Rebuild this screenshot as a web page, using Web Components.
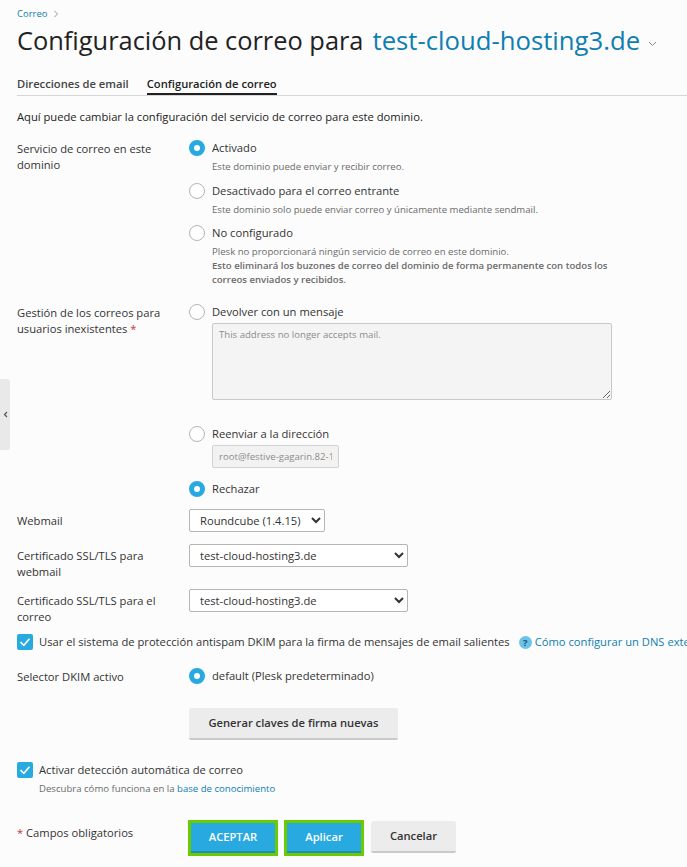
<!DOCTYPE html>
<html lang="es">
<head>
<meta charset="utf-8">
<title>Configuración de correo</title>
<style>
    html, body { margin: 0; padding: 0; height: 867px; overflow: hidden; background: #fcfcfc; }
    body { font-family: "Open Sans", sans-serif; font-size: 11.2px; line-height: 16px; color: #222; }
    a { color: #0f7eb0; text-decoration: none; }
    .req { color: #d02d4b; }
    .ln { display: block; }
    .low { display: block; padding-top: 3px; }
    b { font-weight: 600; }
</style>
</head>
<body>
<mail-page>
    <side-handle slot="handle"></side-handle>
    <page-head crumb="Correo" title-text="Configuración de correo para" domain="test-cloud-hosting3.de"></page-head>
    <tab-bar first="Direcciones de email" active="Configuración de correo"></tab-bar>
    <intro-text>Aquí puede cambiar la configuración del servicio de correo para este dominio.</intro-text>

    <form-row style="margin-top:15px">
        <span slot="label">Servicio de correo en este dominio</span>
        <radio-option checked gap="9" label="Activado">Este dominio puede enviar y recibir correo.</radio-option>
        <radio-option gap="8" label="Desactivado para el correo entrante">Este dominio solo puede enviar correo y únicamente mediante sendmail.</radio-option>
        <radio-option label="No configurado">Plesk no proporcionará ningún servicio de correo en este dominio.<br><b>Esto eliminará los buzones de correo del dominio de forma permanente con todos los correos enviados y recibidos.</b></radio-option>
    </form-row>

    <form-row style="margin-top:17px">
        <span slot="label"><span class="ln">Gestión de los correos para</span><span class="ln">usuarios inexistentes <span class="req">*</span></span></span>
        <radio-option label="Devolver con un mensaje"><message-box>This address no longer accepts mail.</message-box></radio-option>
        <radio-option style="margin-top:26px" label="Reenviar a la dirección"><address-box value="root@festive-gagarin.82-165-76-124.plesk.page"></address-box></radio-option>
        <radio-option style="margin-top:13px" checked label="Rechazar"></radio-option>
    </form-row>

    <form-row style="margin-top:8px" center>
        <span slot="label">Webmail</span>
        <select-box width="136" value="Roundcube (1.4.15)"></select-box>
    </form-row>
    <form-row style="margin-top:12px">
        <span slot="label" class="low">Certificado SSL/TLS para webmail</span>
        <select-box width="219" value="test-cloud-hosting3.de"></select-box>
    </form-row>
    <form-row style="margin-top:9px">
        <span slot="label" class="low">Certificado SSL/TLS para el correo</span>
        <select-box width="219" value="test-cloud-hosting3.de"></select-box>
    </form-row>

    <check-option style="margin-top:9px" label="Usar el sistema de protección antispam DKIM para la firma de mensajes de email salientes">
        <help-link slot="after">Cómo configurar un DNS externo</help-link>
    </check-option>

    <form-row style="margin-top:14px">
        <span slot="label">Selector DKIM activo</span>
        <radio-option checked label="default (Plesk predeterminado)"></radio-option>
    </form-row>

    <form-row style="margin-top:20px">
        <plain-button width="209" height="32">Generar claves de firma nuevas</plain-button>
    </form-row>

    <check-option style="margin-top:22px" label="Activar detección automática de correo">
        <span>Descubra cómo funciona en la <a href="#">base de conocimiento</a></span>
    </check-option>

    <form-actions style="margin-top:24px">
        <span slot="note"><span class="req">*</span> Campos obligatorios</span>
        <plain-button primary width="84" height="30" outlined>ACEPTAR</plain-button>
        <plain-button primary width="74" height="30" outlined>Aplicar</plain-button>
        <plain-button style="margin:1px 0 0 1px" width="85" height="32">Cancelar</plain-button>
    </form-actions>
</mail-page>

<script>
class MailPage extends HTMLElement {
    constructor() {
        super();
        this.attachShadow({ mode: 'open' });
        this.shadowRoot.innerHTML = `
            <style>
                :host { display: block; position: relative; height: 867px; padding: 0 0 0 17px; box-sizing: border-box; }
            </style>
            <slot name="handle"></slot>
            <slot></slot>
        `;
    }
}

class SideHandle extends HTMLElement {
    constructor() {
        super();
        this.attachShadow({ mode: 'open' });
        this.shadowRoot.innerHTML = `
            <style>
                /* sits over the page edge */
                :host {
                    position: absolute; left: 0; top: 379px; width: 10px; height: 71px;
                    background: #e9e9e9; border-radius: 0 3px 3px 0;
                    display: flex; align-items: center; justify-content: center;
                }
                svg { display: block; margin-left: 1px; }
            </style>
            <svg width="5" height="7" viewBox="0 0 5 7"><path d="M4 1 1.5 3.5 4 6" fill="none" stroke="#555" stroke-width="1.2"/></svg>
        `;
    }
}

class PageHead extends HTMLElement {
    constructor() {
        super();
        this.attachShadow({ mode: 'open' });
        this.shadowRoot.innerHTML = `
            <style>
                :host { display: block; }
                .crumb { display: flex; align-items: center; gap: 5px; height: 16px; padding-top: 6px; font-size: 9.5px; color: #0f7eb0; }
                h1 { margin: 1px 0 0; font-size: 25.4px; line-height: 34px; font-weight: 400; color: #222; white-space: nowrap; display: flex; align-items: baseline; }
                h1 a { color: #0f7eb0; text-decoration: none; margin-left: 9px; font-size: 25.7px; }
                h1 svg { align-self: center; margin: 7px 0 0 8px; }
            </style>
            <div class="crumb"><span>${this.getAttribute('crumb')}</span>
                <svg width="6" height="8" viewBox="0 0 6 8"><path d="M1.5 1 4.5 4 1.5 7" fill="none" stroke="#8a8a8a" stroke-width=".9"/></svg>
            </div>
            <h1><span>${this.getAttribute('title-text')}</span><a href="#">${this.getAttribute('domain')}</a>
                <svg width="9" height="6" viewBox="0 0 9 6"><path d="M1 1 4.5 4.5 8 1" fill="none" stroke="#8a8a8a"/></svg>
            </h1>
        `;
    }
}

class TabBar extends HTMLElement {
    constructor() {
        super();
        this.attachShadow({ mode: 'open' });
        this.shadowRoot.innerHTML = `
            <style>
                :host { display: flex; gap: 18px; margin-top: 12px; border-bottom: 1px solid #d6d6d6; height: 26px; box-sizing: border-box; font-size: 11.2px; font-weight: 600; }
                span { display: block; color: #444; padding-top: 6px; height: 17px; }
                .on { color: #222; border-bottom: 2px solid #222; }
            </style>
            <span>${this.getAttribute('first')}</span>
            <span class="on">${this.getAttribute('active')}</span>
        `;
    }
}

class IntroText extends HTMLElement {
    constructor() {
        super();
        this.attachShadow({ mode: 'open' });
        this.shadowRoot.innerHTML = `
            <style>:host { display: block; margin-top: 13px; }</style>
            <slot></slot>
        `;
    }
}

class FormRow extends HTMLElement {
    constructor() {
        super();
        this.attachShadow({ mode: 'open' });
        this.shadowRoot.innerHTML = `
            <style>
                :host { display: grid; grid-template-columns: 172px 1fr; color: #333; }
                :host([center]) { align-items: center; }
                .label { width: 150px; padding-top: 1px; }
                .field { min-width: 0; }
            </style>
            <div class="label"><slot name="label"></slot></div>
            <div class="field"><slot></slot></div>
        `;
    }
}

class RadioOption extends HTMLElement {
    constructor() {
        super();
        this.attachShadow({ mode: 'open' });
        const gap = this.getAttribute('gap');
        this.shadowRoot.innerHTML = `
            <style>
                :host { display: grid; grid-template-columns: 16px 1fr; column-gap: 7px; align-items: start; }
                :host { margin-bottom: ${gap ? gap : 0}px; }
                .dot { width: 16px; height: 16px; box-sizing: border-box; border: 1px solid #b5b5b5; border-radius: 50%; background: #fff; }
                :host([checked]) .dot { border: 5px solid #28a9e0; }
                .text { color: #333; line-height: 16px; }
                .sub { grid-column: 2; font-size: 9.6px; line-height: 14px; color: #6b6b6b; padding-top: 4px; max-width: 404px; }
            </style>
            <span class="dot"></span>
            <span class="text">${this.getAttribute('label')}</span>
            <div class="sub"><slot></slot></div>
        `;
    }
}

class MessageBox extends HTMLElement {
    constructor() {
        super();
        this.attachShadow({ mode: 'open' });
        this.shadowRoot.innerHTML = `
            <style>
                :host { display: block; margin-top: -1px; }
                textarea {
                    display: block; width: 400px; height: 77px; box-sizing: border-box; margin: 0;
                    padding: 3px 6px; border: 1px solid #c8c8c8; background: #f4f4f4;
                    font: 9.6px/15px "Open Sans", sans-serif; color: #8c8c8c; border-radius: 2px;
                }
            </style>
            <textarea disabled>${this.textContent}</textarea>
        `;
    }
}

class AddressBox extends HTMLElement {
    constructor() {
        super();
        this.attachShadow({ mode: 'open' });
        this.shadowRoot.innerHTML = `
            <style>
                :host { display: block; margin-top: -1px; }
                input {
                    display: block; width: 127px; height: 23px; box-sizing: border-box; margin: 0;
                    padding: 0 6px; border: 1px solid #d2d2d2; background: #f2f2f2; border-radius: 2px;
                    font: 9.6px "Open Sans", sans-serif; color: #8c8c8c;
                }
            </style>
            <input disabled value="${this.getAttribute('value')}">
        `;
    }
}

class SelectBox extends HTMLElement {
    constructor() {
        super();
        this.attachShadow({ mode: 'open' });
        this.shadowRoot.innerHTML = `
            <style>
                :host { display: block; }
                select {
                    display: block; width: ${this.getAttribute('width')}px; height: 23px; margin: 0;
                    padding: 0 6px; border: 1px solid #b5b5b5; border-radius: 2px; background: #fff;
                    font: 11.2px "Open Sans", sans-serif; color: #333;
                }
            </style>
            <select><option>${this.getAttribute('value')}</option></select>
        `;
    }
}

class CheckOption extends HTMLElement {
    constructor() {
        super();
        this.attachShadow({ mode: 'open' });
        this.shadowRoot.innerHTML = `
            <style>
                :host { display: grid; grid-template-columns: 16px 1fr; column-gap: 6px; white-space: nowrap; }
                .box { width: 16px; height: 16px; background: #28a9e0; border-radius: 2px; }
                svg { display: block; }
                .line { display: flex; align-items: center; gap: 9px; color: #333; }
                .sub { grid-column: 2; font-size: 9.6px; line-height: 14px; color: #6b6b6b; padding-top: 4px; }
                ::slotted(span) { display: block; }
            </style>
            <span class="box"><svg width="16" height="16" viewBox="0 0 16 16"><path d="M3.5 8.2 6.8 11.3 12.5 4.8" fill="none" stroke="#fff" stroke-width="1.6"/></svg></span>
            <div class="line"><span>${this.getAttribute('label')}</span><slot name="after"></slot></div>
            <div class="sub"><slot></slot></div>
        `;
    }
}

class HelpLink extends HTMLElement {
    constructor() {
        super();
        this.attachShadow({ mode: 'open' });
        this.shadowRoot.innerHTML = `
            <style>
                :host { display: inline-flex; align-items: center; gap: 3px; color: #0f7eb0; }
                .q { width: 13px; height: 13px; border-radius: 50%; background: #6cc3ea; color: #1c4e75; font-size: 9.5px; font-weight: 700; line-height: 13px; text-align: center; }
            </style>
            <span class="q">?</span><span><slot></slot></span>
        `;
    }
}

class PlainButton extends HTMLElement {
    constructor() {
        super();
        this.attachShadow({ mode: 'open' });
        this.shadowRoot.innerHTML = `
            <style>
                :host { display: block; width: fit-content; }
                :host([outlined]) { border: 3px solid #6bcb00; }
                button {
                    display: block; width: ${this.getAttribute('width')}px; height: ${this.getAttribute('height')}px;
                    box-sizing: border-box; margin: 0; padding: 0 0 1px; border: 0; border-bottom: 2px solid #c9c9c9; border-radius: 2px;
                    background: #ececec; color: #333; font: 600 11.2px "Open Sans", sans-serif;
                }
                :host([primary]) button { background: #28a9e0; color: #fff; border-bottom-color: #1c8fc2; border-radius: 0; }
            </style>
            <button type="button"><slot></slot></button>
        `;
    }
}

class FormActions extends HTMLElement {
    constructor() {
        super();
        this.attachShadow({ mode: 'open' });
        this.shadowRoot.innerHTML = `
            <style>
                :host { display: flex; align-items: flex-start; gap: 6px; color: #333; }
                .note { width: 165px; padding-top: 5px; }
            </style>
            <div class="note"><slot name="note"></slot></div>
            <slot></slot>
        `;
    }
}

customElements.define('mail-page', MailPage);
customElements.define('side-handle', SideHandle);
customElements.define('page-head', PageHead);
customElements.define('tab-bar', TabBar);
customElements.define('intro-text', IntroText);
customElements.define('form-row', FormRow);
customElements.define('radio-option', RadioOption);
customElements.define('message-box', MessageBox);
customElements.define('address-box', AddressBox);
customElements.define('select-box', SelectBox);
customElements.define('check-option', CheckOption);
customElements.define('help-link', HelpLink);
customElements.define('plain-button', PlainButton);
customElements.define('form-actions', FormActions);
</script>
</body>
</html>
